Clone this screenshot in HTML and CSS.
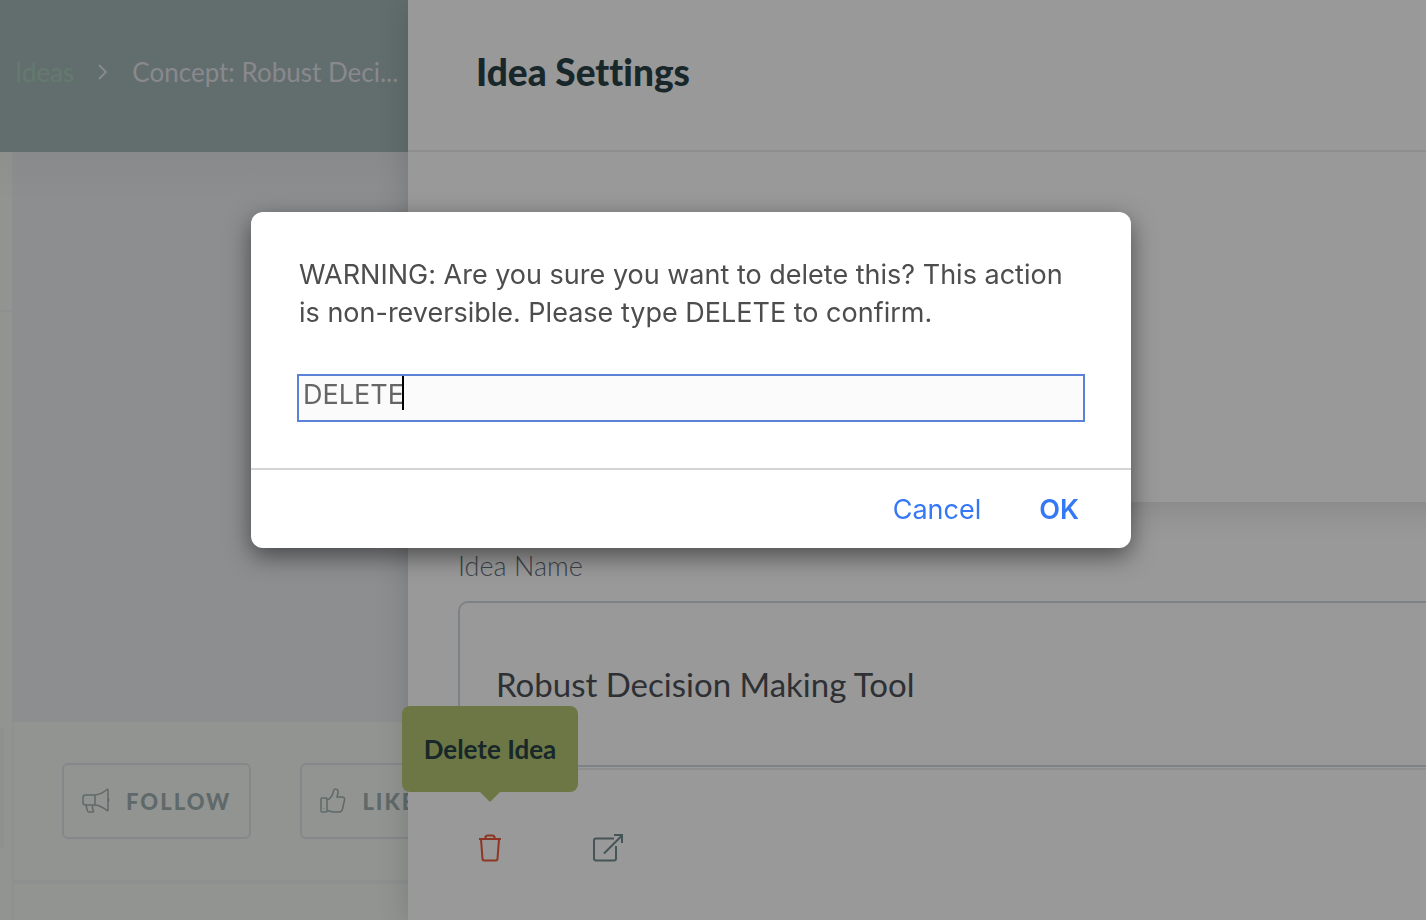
FILE: index.html
```html
<!DOCTYPE html>
<html lang="en">
<head>
    <meta charset="UTF-8">
    <meta name="viewport" content="width=device-width, initial-scale=1.0">
    <title>Idea Settings</title>
    <link rel="stylesheet" href="styles.css">
</head>
<body>
    <div class="page">
        <div class="idea">
            <header class="topbar">
                <nav class="breadcrumb" aria-label="Breadcrumb">
                    <a href="#">Ideas</a>
                    <svg class="chevron" viewBox="0 0 10 16" aria-hidden="true"><path d="M1 1l7 7-7 7"/></svg>
                    <span class="current">Concept: Robust Deci...</span>
                </nav>
            </header>
            <div class="idea-body">
                <div class="rail">
                    <div class="rail-head"></div>
                    <div class="rail-card"></div>
                </div>
                <main class="idea-card">
                    <div class="cover"></div>
                    <div class="actions">
                        <button type="button" class="action">
                            <svg class="icon-follow" viewBox="0 0 28 26" aria-hidden="true">
                                <path d="M13 7H3.500Q1 7 1 9.500V14.500Q1 17 3.500 17H13V7C18 6.500 22 4 25 1.500Q26 1 26 2V22Q26 23 25 22.500C22 20 18 17.500 13 17"/>
                                <path d="M4 17L5.500 23Q6 24 7 24H10.500Q12 24 11.500 23L10.500 20.500V17M26 10.500Q27.500 12 26 13.500"/>
                            </svg>
                            FOLLOW
                        </button>
                        <button type="button" class="action">
                            <svg class="icon-like" viewBox="0 0 26 26" aria-hidden="true">
                                <path d="M1 11Q1 10 2 10H6Q7 10 7 11V23Q7 24 6 24H2Q1 24 1 23ZM4 20.500V21"/>
                                <path d="M7 12C10 11 12 8 13 5L13.500 3Q14 1 15.500 1C17.500 1 18.500 3 18 5L17 9H22Q25 9 24.500 12L22.500 21Q22 24 19 24H14C11 24 10 23 7 22.500"/>
                            </svg>
                            LIKE
                        </button>
                    </div>
                </main>
            </div>
        </div>

        <aside class="drawer">
            <header class="drawer-header">
                <h1>Idea Settings</h1>
            </header>
            <section class="drawer-panel"></section>
            <form class="settings">
                <label for="idea-name">Idea Name</label>
                <input type="text" id="idea-name" value="Robust Decision Making Tool">
            </form>
            <footer class="tools">
                <div class="tool">
                    <span class="tooltip" role="tooltip" id="delete-tip">Delete Idea</span>
                    <button type="button" class="tool-button delete" aria-label="Delete" aria-describedby="delete-tip">
                        <svg class="icon-trash" viewBox="0 0 24 28" aria-hidden="true">
                            <path d="M1 5H23M3 5L4.500 25Q4.700 26.500 6 26.500H18Q19.300 26.500 19.500 25L21 5M7 5Q7.500 1.500 9.500 1.500H14.500Q16.500 1.500 17 5"/>
                        </svg>
                    </button>
                </div>
                <a class="tool-button" href="#" aria-label="Open idea">
                    <svg class="icon-open" viewBox="0 0 30 28" aria-hidden="true">
                        <path d="M21 4.500H3Q1 4.500 1 6.500V24.500Q1 26.500 3 26.500H21Q23 26.500 23 24.500V12M11 19.500L29 1.500M21 1H29V9"/>
                    </svg>
                </a>
            </footer>
        </aside>
    </div>

    <div class="overlay">
        <form class="dialog" role="dialog" aria-modal="true">
            <div class="dialog-body">
                <label for="confirm">WARNING: Are you sure you want to delete this? This action is non-reversible. Please type DELETE to confirm.</label>
                <div class="field">
                    <input type="text" id="confirm" value="DELETE">
                    <span class="caret"></span>
                </div>
            </div>
            <div class="dialog-footer">
                <button type="button">Cancel</button>
                <button type="submit" class="primary">OK</button>
            </div>
        </form>
    </div>
</body>
</html>
```
FILE: styles.css
```css
* {
    box-sizing: border-box;
}

body {
    margin: 0;
    background-color: #929492;
    font-family: Lato, sans-serif;
    font-variant-ligatures: none;
    overflow: hidden;
}

button, input {
    font-family: inherit;
}

button {
    background: none;
    border: none;
    padding: 0;
}

svg {
    fill: none;
    stroke: currentColor;
    stroke-width: 2;
    flex: none;
}

.page {
    display: grid;
    grid-template-columns: 408px 1fr;
    min-height: 100vh;
}

/* idea page behind the drawer */
.idea {
    display: flex;
    flex-direction: column;
    overflow: hidden;
}

.topbar {
    height: 152px;
    padding: 0 12px 8px 15px;
    display: flex;
    align-items: center;
    background-color: #626e6e;
}

.breadcrumb {
    display: flex;
    align-items: center;
    gap: 24px;
    font-size: 26px;
    white-space: nowrap;
    color: #89898d;
}

.breadcrumb a {
    color: #647a6e;
    text-decoration: none;
}

.chevron {
    width: 10px;
    height: 16px;
}

.idea-body {
    flex: 1;
    display: flex;
    background-image: linear-gradient(rgba(0, 0, 0, 0.03), transparent 50px);
}

.rail {
    flex: none;
    width: 12px;
}

.rail-head {
    height: 160px;
    border-bottom: 2px solid #8f9190;
}

.rail-card {
    width: 4px;
    height: 120px;
    margin-top: 416px;
    background-color: #8f918f;
}

.idea-card {
    flex: 1;
    border-left: 2px solid #8e908f;
}

.cover {
    height: 570px;
    margin-left: -2px;
    background-color: #8d8e90;
    background-image: linear-gradient(rgba(0, 0, 0, 0.03), transparent 50px);
}

.actions {
    display: flex;
    gap: 49px;
    padding: 41px 48px;
    border-bottom: 4px solid #8e908f;
}

.action {
    flex: none;
    height: 76px;
    display: flex;
    align-items: center;
    gap: 16px;
    padding: 0 18px;
    border: 2px solid #86878b;
    border-radius: 6px;
    color: #5f696a;
    font-size: 22px;
    font-weight: 900;
    letter-spacing: 2px;
}

.action svg {
    stroke-width: 1.500;
}

.icon-follow {
    width: 28px;
    height: 26px;
}

.icon-like {
    width: 26px;
    height: 26px;
}

/* settings drawer */
.drawer {
    position: relative;
    min-width: 0;
    background-color: #999;
    box-shadow: 0 0 30px rgba(0, 0, 0, 0.16);
}

.drawer-header {
    height: 152px;
    padding: 0 68px 8px;
    display: flex;
    align-items: center;
    border-bottom: 2px solid #8e8e8e;
}

.drawer-header h1 {
    margin: 0;
    font-size: 37px;
    font-weight: 900;
    color: #182729;
}

.drawer-panel {
    height: 350px;
    margin-right: -60px;
    box-shadow: 0 8px 30px rgba(0, 0, 0, 0.12);
    clip-path: inset(0 0 -60px 0);
}

.settings {
    height: 268px;
    padding: 48px 0 0 50px;
    overflow: hidden;
    border-bottom: 2px solid #8e8e8e;
}

.settings label {
    display: block;
    height: 51px;
    line-height: 32px;
    font-size: 27px;
    font-weight: 300;
    color: #3d444c;
}

.settings input {
    display: block;
    width: calc(100% + 50px);
    height: 166px;
    padding: 0 36px;
    border: 2px solid #7d8287;
    border-radius: 10px;
    background: none;
    color: #2e3034;
    font-size: 33px;
    outline: none;
}

.tools {
    display: flex;
    gap: 91px;
    padding: 64px 70px;
}

.tool {
    position: relative;
}

.tool-button {
    display: block;
    color: #455456;
}

.tool-button svg {
    display: block;
    stroke-width: 2;
}

.delete {
    color: #8e3524;
}

.icon-trash {
    width: 24px;
    height: 28px;
}

.icon-open {
    width: 30px;
    height: 28px;
}

.tooltip {
    position: absolute;
    bottom: 70px;
    left: 50%;
    transform: translateX(-50%);
    width: 176px;
    line-height: 86px;
    border-radius: 8px;
    background-color: #6d7746;
    color: #182729;
    font-size: 26px;
    font-weight: 700;
    text-align: center;
    white-space: nowrap;
}

.tooltip::after {
    content: "";
    position: absolute;
    top: 100%;
    left: 50%;
    margin-left: -10px;
    border: 10px solid transparent;
    border-top-color: #6d7746;
    border-bottom: none;
}

/* confirm dialog */
.overlay {
    position: fixed;
    inset: 0;
    display: flex;
    align-items: flex-start;
    justify-content: center;
    padding: 212px 44px 0 0;
}

.dialog {
    width: 880px;
    border-radius: 12px;
    background-color: #fff;
    box-shadow: 0 8px 24px rgba(0, 0, 0, 0.5);
    font-family: Inter, sans-serif;
    font-size: 27px;
}

.dialog-body {
    padding: 44px 46px 46px;
}

.dialog-body label {
    display: block;
    padding: 0 2px;
    margin-bottom: 42px;
    line-height: 38px;
    color: #4d4d4d;
}

.field {
    position: relative;
}

.field input {
    display: block;
    width: 100%;
    height: 48px;
    padding: 0 4px 8px;
    border: 2px solid #5c82d8;
    background-color: #fbfbfb;
    color: #666;
    font-size: 27px;
    outline: none;
}

.caret {
    position: absolute;
    top: 2px;
    left: 105px;
    width: 2px;
    height: 34px;
    background-color: #000;
}

.dialog-footer {
    display: flex;
    justify-content: flex-end;
    gap: 58px;
    padding: 21px 52px 19px;
    border-top: 2px solid #d5d5d5;
}

.dialog-footer button {
    line-height: 38px;
    color: #3478f6;
    font-size: 27px;
}

.dialog-footer .primary {
    font-weight: 600;
}
```
